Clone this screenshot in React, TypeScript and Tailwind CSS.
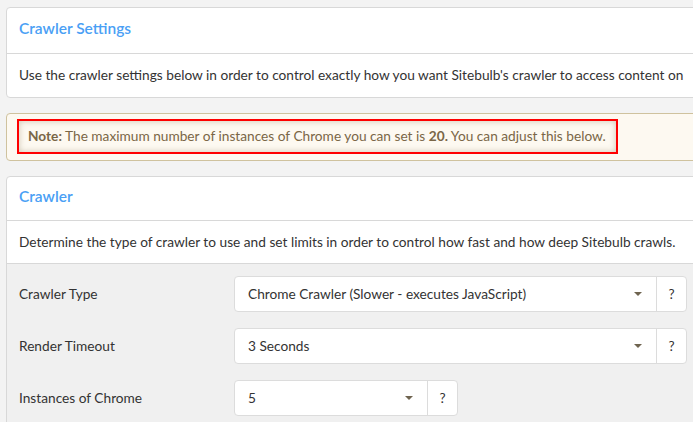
import React from "react";

const rows = [
  { label: "Crawler Type", value: "Chrome Crawler (Slower - executes JavaScript)", width: "w-[453px]" },
  { label: "Render Timeout", value: "3 Seconds", width: "w-[453px]" },
  { label: "Instances of Chrome", value: "5", width: "w-[224px]" },
];

const Caret = () => (
  <svg width="8" height="4" viewBox="0 0 8 4" className="shrink-0">
    <path d="M0 0 L8 0 L4 4 Z" fill="#6f6450" />
  </svg>
);

const App = () => {
  return (
    <div
      className="min-h-screen bg-[#f3f3f3] pl-[6px] pt-[7px] overflow-hidden text-[13.7px] text-[#333]"
      style={{ fontFamily: "Lato, 'Open Sans', sans-serif" }}
    >
      <div className="w-[720px]">
        {/* Crawler Settings */}
        <div className="bg-white border border-[#d8d8d8] rounded-[4px]">
          <div className="h-[46px] flex items-center px-[12px] pb-[4px] border-b border-[#d8d8d8]">
            <h2 className="text-[15.5px] font-semibold text-[#4a9ff5]">Crawler Settings</h2>
          </div>
          <div className="h-[43px] flex items-center px-[12px] whitespace-nowrap">
            Use the crawler settings below in order to control exactly how you want Sitebulb's crawler to access content on
          </div>
        </div>

        {/* Note */}
        <div className="mt-[15px] h-[48px] bg-[#fdf9f1] border border-[#cfc29e] rounded-[4px] pl-[10px] pt-[5px]">
          <div className="w-[601px] h-[35px] border-2 border-[#ff0000] shadow-[inset_0_0_6px_rgba(120,100,60,0.35)] flex items-center pl-[9px] pb-[1px] text-[#7a6646] whitespace-nowrap">
            <b className="font-bold">Note:</b>
            <span>&nbsp;The maximum number of instances of Chrome you can set is&nbsp;</span>
            <b className="font-bold">20.</b>
            <span>&nbsp;You can adjust this below.</span>
          </div>
        </div>

        {/* Crawler */}
        <div className="mt-[15px] bg-white border border-[#d8d8d8] rounded-t-[4px]">
          <div className="h-[44px] flex items-center px-[12px] pb-[4px] border-b border-[#d8d8d8]">
            <h2 className="text-[15.5px] font-semibold text-[#4a9ff5]">Crawler</h2>
          </div>
          <div className="h-[43px] flex items-center px-[12px] border-b border-[#d8d8d8] whitespace-nowrap">
            Determine the type of crawler to use and set limits in order to control how fast and how deep Sitebulb crawls.
          </div>
          <div className="bg-[#f0f0f0] pt-[12px] pb-[12px] flex flex-col gap-[16px]">
            {rows.map((row) => (
              <div key={row.label} className="flex items-center">
                <div className="w-[227px] pl-[12px] text-[#333]">{row.label}</div>
                <div className={`${row.width} h-[36px] flex bg-white border border-[#dcdcdc] rounded-[4px]`}>
                  <div className="flex-1 flex items-center justify-between pl-[13px] pr-[14px]">
                    <span>{row.value}</span>
                    <Caret />
                  </div>
                  <div className="w-[30px] border-l border-[#dcdcdc] flex items-center justify-center text-[#333]">?</div>
                </div>
              </div>
            ))}
          </div>
        </div>
      </div>
    </div>
  );
};

export default App;
